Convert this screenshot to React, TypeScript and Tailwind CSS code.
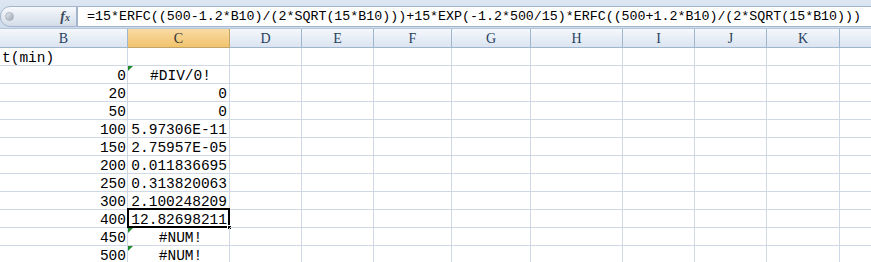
import React from "react";

const cols = [
  { name: "B", w: 128 },
  { name: "C", w: 102 },
  { name: "D", w: 72 },
  { name: "E", w: 72 },
  { name: "F", w: 78 },
  { name: "G", w: 79 },
  { name: "H", w: 92 },
  { name: "I", w: 72 },
  { name: "J", w: 72 },
  { name: "K", w: 73 },
  { name: "", w: 40 },
];

type Row = { b: string; bAlign?: "left" | "right"; c?: string; cCenter?: boolean; tri?: boolean; sel?: boolean };

const rows: Row[] = [
  { b: "t(min)", bAlign: "left" },
  { b: "0", c: "#DIV/0!", cCenter: true, tri: true },
  { b: "20", c: "0" },
  { b: "50", c: "0" },
  { b: "100", c: "5.97306E-11" },
  { b: "150", c: "2.75957E-05" },
  { b: "200", c: "0.011836695" },
  { b: "250", c: "0.313820063" },
  { b: "300", c: "2.100248209" },
  { b: "400", c: "12.82698211", sel: true },
  { b: "450", c: "#NUM!", cCenter: true, tri: true },
  { b: "500", c: "#NUM!", cCenter: true, tri: true },
];

const formula =
  "=15*ERFC((500-1.2*B10)/(2*SQRT(15*B10)))+15*EXP(-1.2*500/15)*ERFC((500+1.2*B10)/(2*SQRT(15*B10)))";

export default function App() {
  return (
    <div className="w-[871px] h-[262px] overflow-hidden bg-white font-['Liberation_Mono',monospace] text-black">
      {/* formula bar area */}
      <div className="h-[29px] bg-gradient-to-b from-[#dde7f3] to-[#cfdcec] pt-[6px] border-b border-[#b6c7dc]">
        <div className="flex h-[21px]">
          <div className="w-[77px] h-full rounded-l-[10px] border border-[#a3b5cc] bg-gradient-to-b from-[#f7f9fc] to-[#d3dce8] flex items-center justify-between pl-[4px] pr-[6px]">
            <div className="w-[9px] h-[9px] rounded-full bg-gradient-to-br from-[#e8ecf1] to-[#9aa5b2] border border-[#aab4c0]" />
            <div className="font-['Liberation_Serif',serif] italic font-bold text-[#3d4b5c] text-[14px] leading-none">
              f<span className="text-[10px]">x</span>
            </div>
          </div>
          <div className="flex-1 h-full bg-white border-t border-b border-l border-[#a3b5cc] pl-[9px] pt-[1px] flex items-center text-[13.3px] leading-none whitespace-nowrap overflow-hidden">
            {formula}
          </div>
        </div>
      </div>
      {/* header row */}
      <div className="flex h-[19px]">
        {cols.map((c, i) => (
          <div
            key={i}
            style={{ width: c.w }}
            className={
              "shrink-0 h-full border-r border-b flex items-center justify-center pt-[1px] font-['Liberation_Serif',serif] text-[14px] leading-none " +
              (c.name === "C"
                ? "bg-gradient-to-b from-[#f9dba3] to-[#f1c36c] border-[#c2a56b] text-[#333]"
                : "bg-gradient-to-b from-[#f5f8fc] to-[#dbe4f0] border-[#9eb6ce] text-[#27415f]")
            }
          >
            {c.name}
          </div>
        ))}
      </div>
      {/* rows */}
      {rows.map((r, ri) => (
        <div key={ri} className="flex h-[18px]">
          {cols.map((c, ci) => {
            const base = "shrink-0 h-full border-r border-b border-[#d0d7e5] text-[14.5px] leading-none flex items-center pt-[3px] relative";
            if (ci === 0) {
              return (
                <div
                  key={ci}
                  style={{ width: c.w }}
                  className={base + (r.bAlign === "left" ? " justify-start pl-[2px]" : " justify-end pr-[1px]")}
                >
                  {r.b}
                </div>
              );
            }
            if (ci === 1) {
              return (
                <div
                  key={ci}
                  style={{ width: c.w }}
                  className={base + (r.cCenter ? " justify-center pl-[4px]" : " justify-end pr-[2px]")}
                >
                  {r.tri && (
                    <div className="absolute left-0 top-0 w-0 h-0 border-t-[5px] border-t-[#1f8a2a] border-r-[5px] border-r-transparent" />
                  )}
                  {r.c}
                  {r.sel && (
                    <>
                      <div className="absolute -left-[1px] -top-[2px] -right-[1px] -bottom-[1px] border-2 border-black" />
                      <div className="absolute -right-[3px] -bottom-[3px] w-[5px] h-[5px] bg-black border border-white" />
                    </>
                  )}
                </div>
              );
            }
            return <div key={ci} style={{ width: c.w }} className={base} />;
          })}
        </div>
      ))}
    </div>
  );
}
